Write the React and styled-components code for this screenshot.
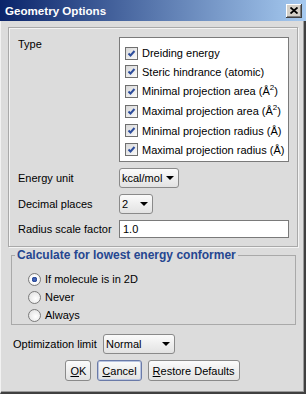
import styled, { createGlobalStyle } from "styled-components";

const GlobalStyle = createGlobalStyle`
  html, body {
    margin: 0;
    padding: 0;
    background: #dcdcdc;
  }
  body {
    font-family: "Liberation Sans", Arial, sans-serif;
    font-size: 11px;
    color: #000;
  }
`;

const types = [
  { label: "Dreiding energy", h: 18 },
  { label: "Steric hindrance (atomic)", h: 19 },
  { label: "Minimal projection area (Å", sup: "2", h: 20 },
  { label: "Maximal projection area (Å", sup: "2", h: 20 },
  { label: "Minimal projection radius (Å)", h: 19 },
  { label: "Maximal projection radius (Å)", h: 19 },
];

const conformer = ["If molecule is in 2D", "Never", "Always"];

const Check = () => (
  <CheckBox>
    <svg width="9" height="9" viewBox="0 0 9 9">
      <path d="M1.5 4.5 L3.5 6.5 L7.5 2" fill="none" stroke="#2d4d9c" strokeWidth="2" />
    </svg>
  </CheckBox>
);

const Arrow = () => (
  <svg width="8" height="4" viewBox="0 0 8 4">
    <path d="M0 0 H8 L4 4 Z" fill="#000" />
  </svg>
);

export default function App() {
  return (
    <>
      <GlobalStyle />
      <Window>
        <TitleBar>
          <Title>Geometry Options</Title>
          <CloseButton>
            <svg width="8" height="7" viewBox="0 0 8 7">
              <path d="M0.5 0.5 L7.5 6.5 M7.5 0.5 L0.5 6.5" stroke="#000" strokeWidth="1.8" />
            </svg>
          </CloseButton>
        </TitleBar>

        <Body>
          <Panel>
            <Label $top>Type</Label>
            <ListBox>
              {types.map((t) => (
                <CheckRow key={t.label} $h={t.h}>
                  <Check />
                  <span>
                    {t.label}
                    {t.sup && (
                      <>
                        <sup>{t.sup}</sup>)
                      </>
                    )}
                  </span>
                </CheckRow>
              ))}
            </ListBox>

            <Label>Energy unit</Label>
            <Combo $w={60}>
              <span>kcal/mol</span>
              <Arrow />
            </Combo>

            <Label>Decimal places</Label>
            <Combo $w={34}>
              <span>2</span>
              <Arrow />
            </Combo>

            <Label>Radius scale factor</Label>
            <TextField>1.0</TextField>
          </Panel>

          <Group>
            <Legend>Calculate for lowest energy conformer</Legend>
            {conformer.map((c, i) => (
              <RadioRow key={c}>
                <Radio $on={i === 0} />
                <span>{c}</span>
              </RadioRow>
            ))}
          </Group>

          <LimitRow>
            <LimitLabel>Optimization limit</LimitLabel>
            <Combo $w={72}>
              <span>Normal</span>
              <Arrow />
            </Combo>
          </LimitRow>

          <Buttons>
            <Button>
              <u>O</u>K
            </Button>
            <Button $focus>
              <u>C</u>ancel
            </Button>
            <Button>
              <u>R</u>estore Defaults
            </Button>
          </Buttons>
        </Body>
      </Window>
    </>
  );
}

const Window = styled.div`
  width: 306px;
  height: 394px;
  box-sizing: border-box;
  background: #dcdcdc;
  border-left: 1px solid #f2f2f2;
  border-right: 2px solid #404040;
  border-bottom: 2px solid #404040;
  box-shadow: inset -1px -1px 0 #9a9a9a;
  display: flex;
  flex-direction: column;
`;

const TitleBar = styled.div`
  height: 21px;
  margin-left: -1px;
  margin-right: -2px;
  background: linear-gradient(to right, #0a246a, #a6caf0);
  display: flex;
  align-items: center;
  justify-content: space-between;
  padding: 0 4px 0 5px;
`;

const Title = styled.div`
  color: #fff;
  font-weight: bold;
  font-size: 11.6px;
`;

const CloseButton = styled.div`
  width: 16px;
  height: 14px;
  box-sizing: border-box;
  background: #d4d0c8;
  box-shadow: inset -1px -1px 0 #404040, inset 1px 1px 0 #fff, inset -2px -2px 0 #808080;
  display: flex;
  align-items: center;
  justify-content: center;
`;

const Body = styled.div`
  padding: 6px 7px 0 7px;
  display: flex;
  flex-direction: column;
`;

const Panel = styled.div`
  width: 290px;
  box-sizing: border-box;
  border: 1px solid #a9a9a9;
  box-shadow: inset 1px 1px 0 #f4f4f4, 1px 1px 0 #f4f4f4;
  padding: 9px 8px 8px 9px;
  display: grid;
  grid-template-columns: 101px 1fr;
  row-gap: 6px;
  align-items: center;
`;

const Label = styled.div`
  align-self: ${(p) => (p.$top ? "start" : "center")};
  padding-top: ${(p) => (p.$top ? "1px" : "0")};
`;

const ListBox = styled.div`
  height: 125px;
  box-sizing: border-box;
  background: #fff;
  border: 1px solid #7a7a7a;
  padding: 6px 0 0 5px;
`;

const CheckRow = styled.div`
  height: ${(p) => p.$h}px;
  display: flex;
  align-items: center;
  gap: 4px;
  white-space: nowrap;

  sup {
    font-size: 8px;
    line-height: 0;
  }
`;

const CheckBox = styled.div`
  width: 13px;
  height: 13px;
  box-sizing: border-box;
  flex: none;
  border: 1px solid #6f6f6f;
  background: linear-gradient(135deg, #d8d8d8, #fafafa);
  display: flex;
  align-items: center;
  justify-content: center;
`;

const Combo = styled.div`
  width: ${(p) => p.$w}px;
  height: 20px;
  box-sizing: border-box;
  border: 1px solid #8a8a8a;
  border-radius: 3px;
  background: linear-gradient(#fbfbfb, #e2e2e2);
  display: flex;
  align-items: center;
  justify-content: space-between;
  padding: 0 4px 0 2px;
`;

const TextField = styled.div`
  height: 18px;
  box-sizing: border-box;
  background: #fff;
  border: 1px solid #7a7a7a;
  padding: 0 3px;
  display: flex;
  align-items: center;
`;

const Group = styled.fieldset`
  margin: 1px 0 0 3px;
  width: 285px;
  box-sizing: border-box;
  border: 1px solid #a9a9a9;
  padding: 8px 0 0 16px;
  min-width: 0;
`;

const Legend = styled.legend`
  margin-left: -13px;
  padding: 0 2px;
  color: #254690;
  font-weight: bold;
  font-size: 12px;
`;

const RadioRow = styled.div`
  height: 18px;
  display: flex;
  align-items: center;
  gap: 4px;
`;

const Radio = styled.div`
  width: 13px;
  height: 13px;
  box-sizing: border-box;
  border-radius: 50%;
  border: 1px solid #7a7a7a;
  background: ${(p) =>
    p.$on
      ? "radial-gradient(circle, #5070c0 0, #2a4a9a 2.5px, #ffffff 3px, #e4e4e4 100%)"
      : "radial-gradient(circle at 60% 60%, #ffffff, #dcdcdc)"};
`;

const LimitRow = styled.div`
  margin-top: 9px;
  padding-left: 5px;
  display: flex;
  align-items: center;
`;

const LimitLabel = styled.div`
  width: 90px;
`;

const Buttons = styled.div`
  margin-top: 6px;
  display: flex;
  justify-content: center;
  gap: 6px;
`;

const Button = styled.div`
  height: 21px;
  box-sizing: border-box;
  padding: 0 4px;
  border: 1px solid ${(p) => (p.$focus ? "#6a7aa8" : "#8a8a8a")};
  box-shadow: ${(p) => (p.$focus ? "inset 0 0 0 1px #b8c4e0" : "none")};
  border-radius: 3px;
  background: linear-gradient(#fbfbfb, #e2e2e2);
  display: flex;
  align-items: center;
`;
